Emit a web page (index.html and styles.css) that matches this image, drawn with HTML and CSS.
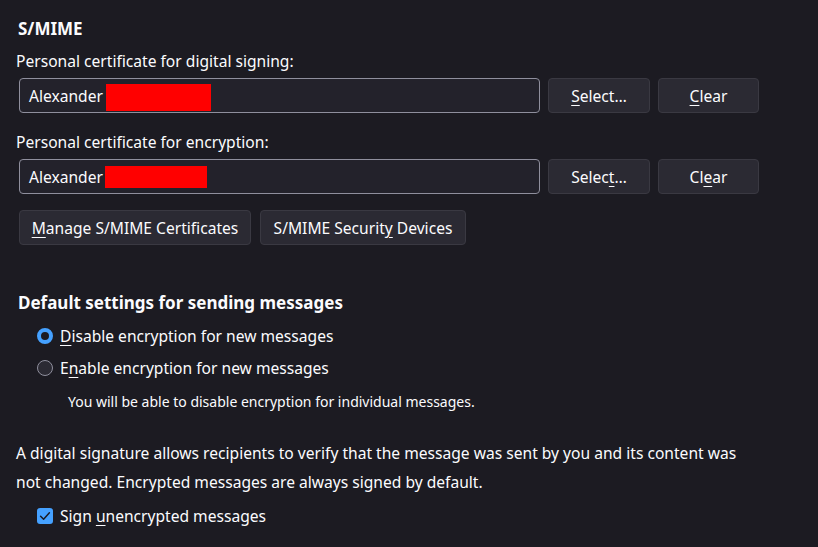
FILE: index.html
```html
<!DOCTYPE html>
<html lang="en">
<head>
<meta charset="utf-8">
<title>S/MIME</title>
<link rel="stylesheet" href="styles.css">
</head>
<body>
<div class="page">
  <h2 class="title">S/MIME</h2>
  <div class="label">Personal certificate for digital signing:</div>
  <div class="cert-row">
    <div class="field">Alexander<span class="redact r1"></span></div>
    <button class="btn btn-select"><u>S</u>elect…</button>
    <button class="btn btn-clear"><u>C</u>lear</button>
  </div>
  <div class="label label2">Personal certificate for encryption:</div>
  <div class="cert-row">
    <div class="field">Alexander<span class="redact r2"></span></div>
    <button class="btn btn-select">Selec<u>t</u>…</button>
    <button class="btn btn-clear">Cl<u>e</u>ar</button>
  </div>
  <div class="manage-row">
    <button class="btn btn-manage"><u>M</u>anage S/MIME Certificates</button>
    <button class="btn btn-devices">S/MIME Securit<u>y</u> Devices</button>
  </div>

  <h3 class="subtitle">Default settings for sending messages</h3>
  <div class="option">
    <span class="radio checked"></span>
    <span><u>D</u>isable encryption for new messages</span>
  </div>
  <div class="option">
    <span class="radio"></span>
    <span>E<u>n</u>able encryption for new messages</span>
  </div>
  <div class="note">You will be able to disable encryption for individual messages.</div>

  <p class="para">A digital signature allows recipients to verify that the message was sent by you and its content was not changed. Encrypted messages are always signed by default.</p>
  <div class="option check-option">
    <span class="checkbox">
      <svg viewBox="0 0 16 16" width="16" height="16"><path d="M3.6 8.2 L6.6 11.2 L12.4 4.8" fill="none" stroke="#1c1b22" stroke-width="1.5" stroke-linecap="round" stroke-linejoin="round"/></svg>
    </span>
    <span>Sign <u>u</u>nencrypted messages</span>
  </div>
</div>
</body>
</html>
```
FILE: styles.css
```css
html, body {
  margin: 0;
  padding: 0;
  background: #1c1b22;
}
body {
  color: #fbfbfe;
  font-family: "Noto Sans", "Open Sans", sans-serif;
  font-size: 15.6px;
  width: 818px;
  height: 547px;
  overflow: hidden;
}
.page {
  padding: 17px 16px 0 16px;
}
u {
  text-decoration: underline;
  text-underline-offset: 3px;
  text-decoration-thickness: 1px;
}
.title {
  margin: 0 0 0 2px;
  font-size: 17px;
  font-weight: 700;
  line-height: 24px;
}
.label {
  margin-top: 10px;
  line-height: 20px;
}
.label2 {
  margin-top: 19px;
}
.cert-row {
  display: flex;
  gap: 8px;
  margin-top: 7px;
  padding-left: 3px;
  height: 35px;
}
.field {
  position: relative;
  box-sizing: border-box;
  width: 521px;
  height: 35px;
  border: 1px solid #8f8f9d;
  border-radius: 4px;
  background: #23222b;
  padding-left: 9px;
  display: flex;
  align-items: center;
}
.redact {
  position: absolute;
  background: #ff0000;
}
.r1 { left: 86px; top: 5px; width: 105px; height: 27px; }
.r2 { left: 85px; top: 6px; width: 102px; height: 22px; }
.btn {
  box-sizing: border-box;
  height: 35px;
  margin: 0;
  padding: 0 8px;
  background: #2b2a33;
  border: 1px solid #3a3942;
  border-radius: 4px;
  color: #fbfbfe;
  font-family: inherit;
  font-size: 15.6px;
  white-space: nowrap;
}
.btn-select { width: 102px; }
.btn-clear { width: 101px; }
.manage-row {
  display: flex;
  gap: 9px;
  margin-top: 16px;
  padding-left: 3px;
}
.btn-manage { width: 232px; }
.btn-devices { width: 206px; }
.subtitle {
  margin: 47px 0 0 2px;
  font-size: 17px;
  font-weight: 700;
  line-height: 22px;
}
.option {
  display: flex;
  align-items: center;
  gap: 7px;
  height: 32px;
  padding-left: 21px;
}
.subtitle + .option {
  margin-top: 6px;
}
.radio {
  box-sizing: border-box;
  width: 16px;
  height: 16px;
  border-radius: 50%;
  border: 1px solid #8f8f9d;
  background: #2b2a33;
  flex: none;
}
.radio.checked {
  border: 4px solid #45a1ff;
  background: #1c1b22;
}
.note {
  margin-top: 8px;
  padding-left: 52px;
  font-size: 14px;
  line-height: 20px;
}
.para {
  margin: 27px 0 0 0;
  line-height: 29px;
  max-width: 735px;
}
.check-option {
  margin-top: 3px;
}
.checkbox {
  width: 16px;
  height: 16px;
  border-radius: 3px;
  background: #45a1ff;
  flex: none;
  display: flex;
}
```
